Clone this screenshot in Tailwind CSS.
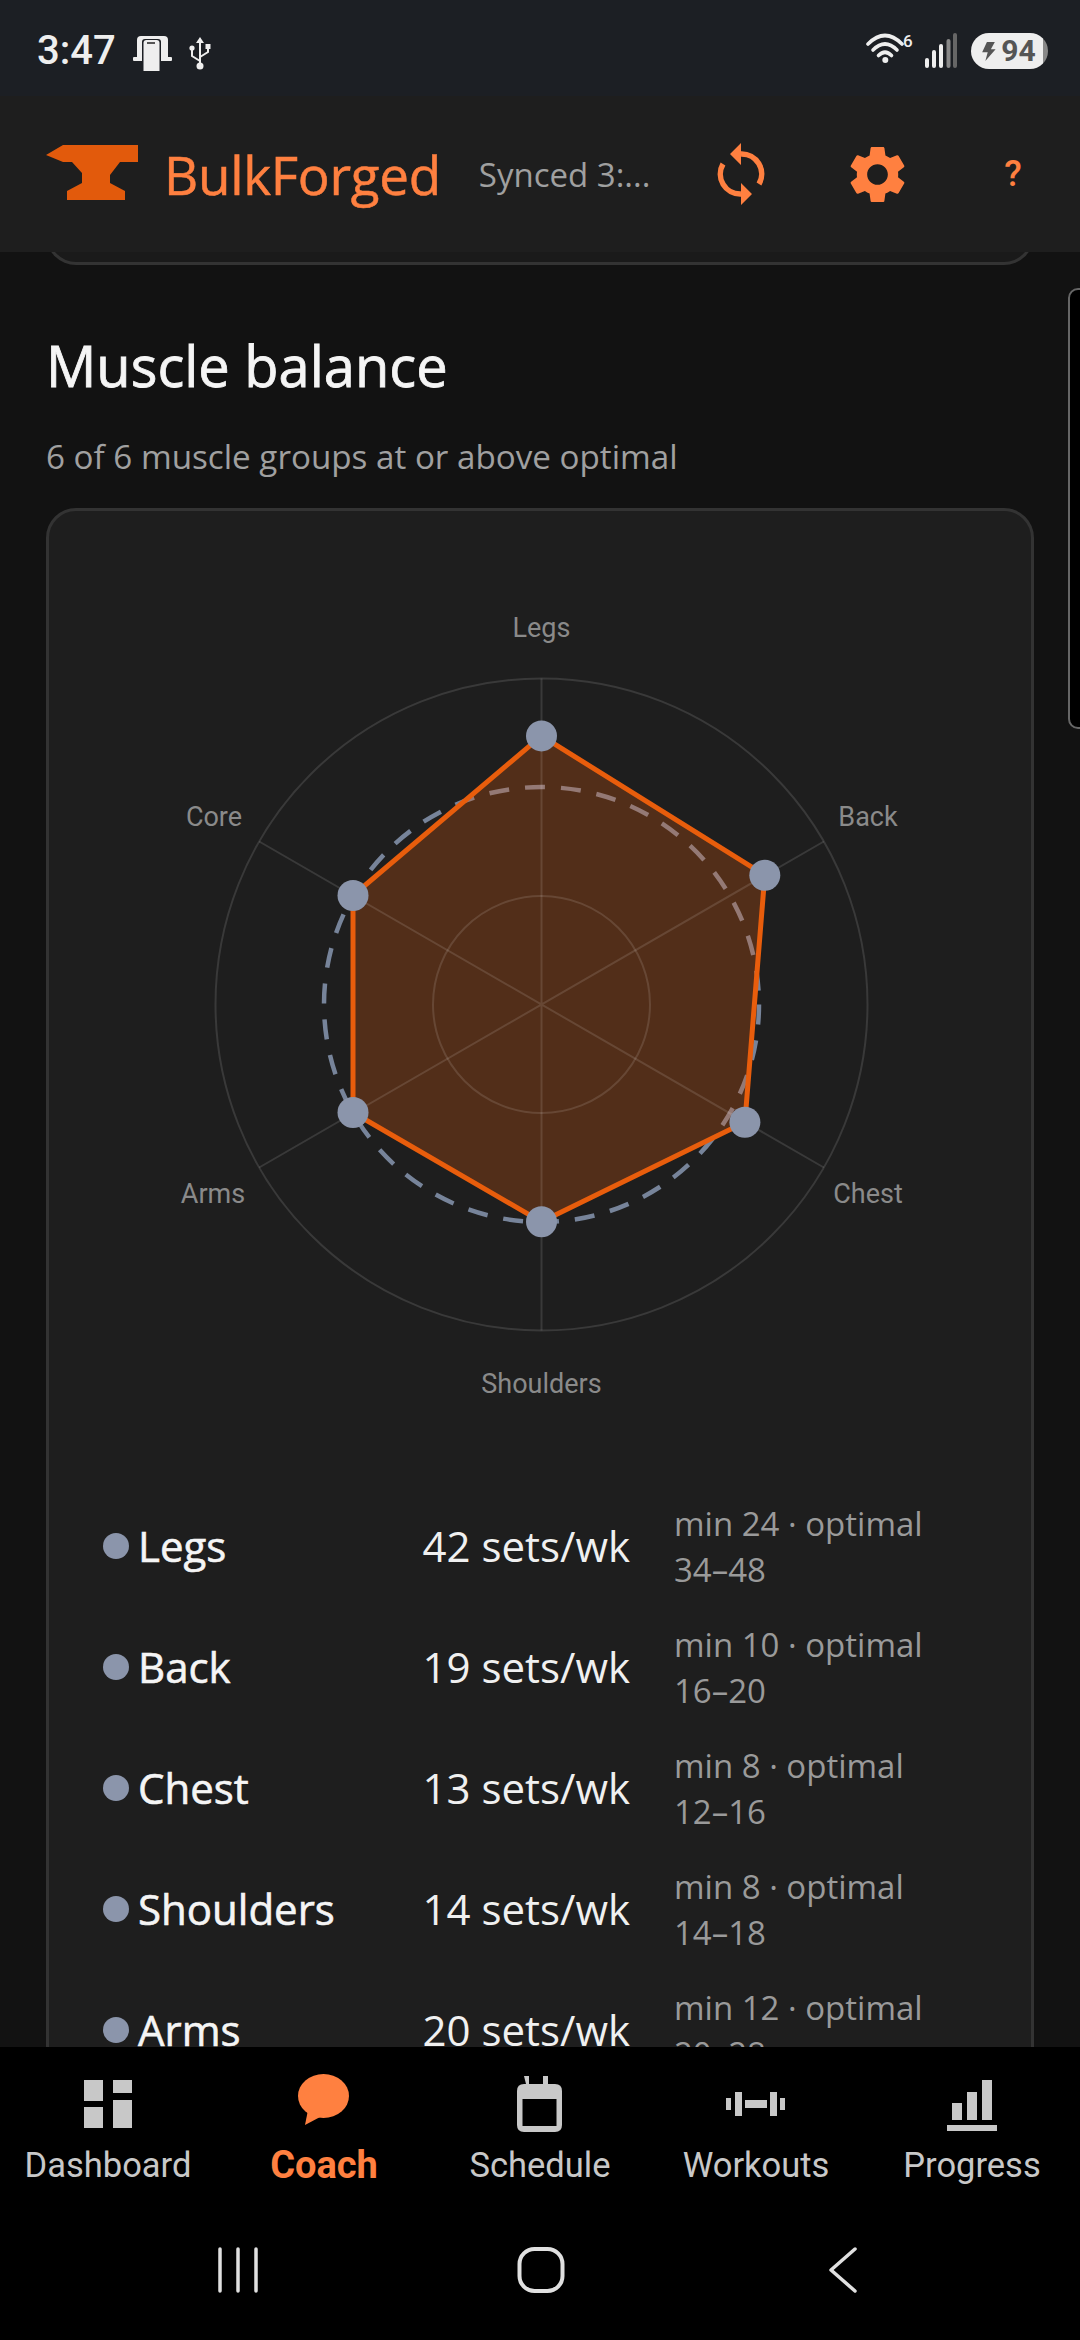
<!DOCTYPE html>
<html lang="en">
<head>
<meta charset="utf-8"/>
<meta content="width=device-width, initial-scale=1.0" name="viewport"/>
<title>BulkForged</title>
<script src="https://cdn.jsdelivr.net/npm/@tailwindcss/browser@4"></script>
</head>
<body class="bg-[#121212]">
<div class="relative flex h-[2340px] w-[1080px] flex-col overflow-hidden font-['Open_Sans',sans-serif]">

<!-- status bar -->
<div class="flex h-[96px] shrink-0 items-center justify-between bg-[#1c1f24] pl-[37px] pr-[32px] text-[#eeeeee]">
  <div class="mt-[5px] flex items-center">
    <span class="font-['Roboto',sans-serif] text-[40px] font-medium leading-none">3:47</span>
    <svg class="ml-[17px] mt-[5px]" width="39" height="36" viewBox="133 35 39 36">
      <path d="M137 58V40q0-4 4-4h23q4 0 4 4v18z" fill="#eee"/>
      <rect x="133" y="57" width="39" height="4" rx="1" fill="#eee"/>
      <path d="M142 71V42q0-3 3-3h13q3 0 3 3v29z" fill="#1c1f24"/>
      <path d="M143.5 71V43q0-3 3-3h10q3 0 3 3v28z" fill="#eee"/>
      <rect x="147" y="42" width="8" height="2" fill="#555"/>
    </svg>
    <svg class="ml-[17px] mt-[5px]" width="24" height="34" viewBox="188 35 24 34">
      <path d="M199 36l-4 6h8z" fill="#eee"/>
      <path d="M199 41v24M199 60l-8-5v-6M199 56l8-5v-5" fill="none" stroke="#eee" stroke-width="2"/>
      <circle cx="191" cy="47" r="2.6" fill="#eee"/>
      <rect x="204.5" y="43" width="5" height="5" fill="#eee"/>
      <circle cx="199" cy="65" r="3.5" fill="#eee"/>
    </svg>
  </div>
  <div class="mt-[6px] flex items-center">
    <svg class="-mt-[4px]" width="50" height="36" viewBox="866 31 50 36">
      <g fill="none" stroke="#eee" stroke-linecap="round" stroke-width="3.6">
        <path d="M869 44Q886 27 903 44"/>
        <path d="M874 50Q886 38 898 50"/>
        <path d="M879.5 55.5Q886 49 892.500 55.500"/>
      </g>
      <circle cx="886.300" cy="60" r="3" fill="#eee"/>
      <text x="904" y="47" fill="#eee" font-family="Roboto" font-size="17" font-weight="500">6</text>
    </svg>
    <svg class="ml-[9px]" width="33" height="36" viewBox="924 33 33 36">
      <g stroke-linecap="round" stroke-width="4">
        <path d="M927 66v-6" stroke="#eee"/>
        <path d="M934 66v-14" stroke="#eee"/>
        <path d="M941 66v-20" stroke="#eee"/>
        <path d="M948.500 66v-25" stroke="#888"/>
        <path d="M955 66v-31" stroke="#666"/>
      </g>
    </svg>
    <div class="ml-[14px] flex h-[36px] w-[77px] items-center justify-center rounded-full bg-[linear-gradient(90deg,#eeeeee_94%,#888888_94%)] pr-[2px]">
      <svg width="15" height="19" viewBox="0 0 18 24"><path d="M7 0h10l-5 9h6L5 24l3-11H1z" fill="#555"/></svg>
      <span class="ml-[5px] font-['Roboto',sans-serif] text-[30px] font-bold leading-none text-[#555555]">94</span>
    </div>
  </div>
</div>

<!-- app header -->
<div class="z-10 flex h-[156px] shrink-0 items-center bg-[#1e1e1e] pl-[46px]">
  <svg class="-mt-[3px]" width="92" height="55" viewBox="46 147 92 55">
    <path d="M46 157L63 147H138V164H120L110 177V185L125 193V202H67V193L82 185V175L72 164H63z" fill="#e25a0c"/>
  </svg>
  <span class="ml-[26px] text-[53px] leading-none tracking-[-0.3px] text-[#ff8040] [-webkit-text-stroke:0.5px]">BulkForged</span>
  <span class="ml-[38px] text-[33px] leading-none text-[#a0a0a0]">Synced 3:...</span>
  <svg class="ml-[67px]" width="48" height="64" viewBox="717 142 48 64">
    <g fill="none" stroke="#ff8040" stroke-width="5.500">
      <path d="M741 154A20 20 0 0 1 759 184"/>
      <path d="M723 164A20 20 0 0 0 741 194"/>
    </g>
    <path d="M741 143L730 154L741 165zM741 183L752 194L741 205z" fill="#ff8040"/>
  </svg>
  <svg class="ml-[78px]" width="69" height="69" viewBox="0 0 24 24">
    <path fill="#ff8040" d="M19.14,12.94c0.04-0.3,0.06-0.61,0.06-0.94c0-0.32-0.02-0.64-0.07-0.94l2.03-1.58c0.18-0.14,0.23-0.41,0.12-0.61 l-1.92-3.32c-0.12-0.22-0.37-0.29-0.59-0.22l-2.39,0.96c-0.5-0.38-1.03-0.7-1.62-0.94L14.4,2.81c-0.04-0.24-0.24-0.41-0.48-0.41 h-3.84c-0.24,0-0.43,0.17-0.47,0.41L9.25,5.35C8.66,5.59,8.12,5.92,7.63,6.29L5.24,5.33c-0.22-0.08-0.47,0-0.59,0.22L2.74,8.87 C2.62,9.08,2.66,9.34,2.86,9.48l2.03,1.58C4.84,11.36,4.8,11.69,4.8,12s0.02,0.64,0.07,0.94l-2.03,1.58 c-0.18,0.14-0.23,0.41-0.12,0.61l1.92,3.32c0.12,0.22,0.37,0.29,0.59,0.22l2.39-0.96c0.5,0.38,1.03,0.7,1.62,0.94l0.36,2.54 c0.05,0.24,0.24,0.41,0.48,0.41h3.84c0.24,0,0.44-0.17,0.47-0.41l0.36-2.54c0.59-0.24,1.13-0.56,1.62-0.94l2.39,0.96 c0.22,0.08,0.47,0,0.59-0.22l1.92-3.32c0.12-0.22,0.07-0.47-0.12-0.61L19.14,12.94z M12,15.6c-1.98,0-3.6-1.62-3.6-3.6 s1.62-3.6,3.6-3.6s3.6,1.62,3.6,3.6S13.98,15.6,12,15.6z"/>
  </svg>
  <span class="ml-[92px] font-['Roboto',sans-serif] text-[36px] font-medium leading-none text-[#ff8040]">?</span>
</div>

<!-- scrolling content -->
<div class="min-h-0 flex-1 overflow-hidden px-[46px]">
  <div class="-mt-[40px] h-[53px] rounded-b-[30px] border-x-[3px] border-b-[3px] border-[#333333] bg-[#1a1a1a]"></div>
  <h2 class="mt-[66px] text-[56px] font-medium leading-[68px] text-[#f5f5f5] [-webkit-text-stroke:0.8px]">Muscle balance</h2>
  <p class="mt-[35px] text-[33.2px] leading-[46px] text-[#a0a0a0]">6 of 6 muscle groups at or above optimal</p>
  <div class="mt-[28px] h-[1700px] rounded-[30px] border-[3px] border-[#333333] bg-[#1e1e1e]">
    <svg class="block" width="980" height="949" viewBox="49 511.500 980 949">
      <circle cx="541.500" cy="1005" r="217.500" fill="none" stroke="#77849a" stroke-width="4.500" stroke-dasharray="20 16"/>
      <path d="M541.500 736.400L764.800 875.700L744.900 1122.700L541.500 1222.300L353 1113V896z" fill="#e85d0c" fill-opacity="0.26" stroke="#e85d0c" stroke-width="5" stroke-linejoin="round"/>
      <g fill="none" stroke="#ffffff" stroke-opacity="0.12" stroke-width="2">
        <circle cx="541.500" cy="1005" r="326"/>
        <circle cx="541.500" cy="1005" r="108.500"/>
        <path d="M541.500 679V1331M259.200 842L823.800 1168M259.200 1168L823.800 842"/>
      </g>
      <g fill="#8b95ab">
        <circle cx="541.500" cy="736.400" r="15.500"/>
        <circle cx="764.800" cy="875.700" r="15.500"/>
        <circle cx="744.900" cy="1122.700" r="15.500"/>
        <circle cx="541.500" cy="1222.300" r="15.500"/>
        <circle cx="353" cy="1113" r="15.500"/>
        <circle cx="353" cy="896" r="15.500"/>
      </g>
      <g fill="#8a8a8a" font-family="Roboto" font-size="27" text-anchor="middle">
        <text x="541.500" y="637">Legs</text>
        <text x="868" y="826">Back</text>
        <text x="868" y="1203">Chest</text>
        <text x="541.500" y="1393">Shoulders</text>
        <text x="213" y="1203">Arms</text>
        <text x="214" y="826">Core</text>
      </g>
    </svg>
    <div class="pl-[54px] pt-[25px]">
      <div class="flex h-[121px] items-center">
        <span class="h-[26px] w-[26px] shrink-0 rounded-full bg-[#8b95ab]"></span>
        <span class="ml-[9px] w-[260px] text-[42px] font-medium text-[#f5f5f5] [-webkit-text-stroke:0.6px]">Legs</span>
        <span class="w-[232px] text-right text-[42px] text-[#f0f0f0]">42 sets/wk</span>
        <span class="ml-[44px] mt-[3px] w-[270px] text-[33px] leading-[46px] text-[#9a9a9a]">min 24 · optimal 34–48</span>
      </div>
      <div class="flex h-[121px] items-center">
        <span class="h-[26px] w-[26px] shrink-0 rounded-full bg-[#8b95ab]"></span>
        <span class="ml-[9px] w-[260px] text-[42px] font-medium text-[#f5f5f5] [-webkit-text-stroke:0.6px]">Back</span>
        <span class="w-[232px] text-right text-[42px] text-[#f0f0f0]">19 sets/wk</span>
        <span class="ml-[44px] mt-[3px] w-[270px] text-[33px] leading-[46px] text-[#9a9a9a]">min 10 · optimal 16–20</span>
      </div>
      <div class="flex h-[121px] items-center">
        <span class="h-[26px] w-[26px] shrink-0 rounded-full bg-[#8b95ab]"></span>
        <span class="ml-[9px] w-[260px] text-[42px] font-medium text-[#f5f5f5] [-webkit-text-stroke:0.6px]">Chest</span>
        <span class="w-[232px] text-right text-[42px] text-[#f0f0f0]">13 sets/wk</span>
        <span class="ml-[44px] mt-[3px] w-[270px] text-[33px] leading-[46px] text-[#9a9a9a]">min 8 · optimal 12–16</span>
      </div>
      <div class="flex h-[121px] items-center">
        <span class="h-[26px] w-[26px] shrink-0 rounded-full bg-[#8b95ab]"></span>
        <span class="ml-[9px] w-[260px] text-[42px] font-medium text-[#f5f5f5] [-webkit-text-stroke:0.6px]">Shoulders</span>
        <span class="w-[232px] text-right text-[42px] text-[#f0f0f0]">14 sets/wk</span>
        <span class="ml-[44px] mt-[3px] w-[270px] text-[33px] leading-[46px] text-[#9a9a9a]">min 8 · optimal 14–18</span>
      </div>
      <div class="flex h-[121px] items-center">
        <span class="h-[26px] w-[26px] shrink-0 rounded-full bg-[#8b95ab]"></span>
        <span class="ml-[9px] w-[260px] text-[42px] font-medium text-[#f5f5f5] [-webkit-text-stroke:0.6px]">Arms</span>
        <span class="w-[232px] text-right text-[42px] text-[#f0f0f0]">20 sets/wk</span>
        <span class="ml-[44px] mt-[3px] w-[270px] text-[33px] leading-[46px] text-[#9a9a9a]">min 12 · optimal 20–28</span>
      </div>
    </div>
  </div>
</div>

<!-- edge drawer handle -->
<div class="absolute left-[1068px] top-[288px] h-[441px] w-[30px] rounded-[10px] border-2 border-[#666666] bg-black"></div>

<!-- bottom tabs -->
<div class="z-10 h-[293px] shrink-0 bg-black">
  <div class="grid h-[163px] grid-cols-5 font-['Roboto',sans-serif] text-[34.5px] leading-[36px] text-[#c8c8c8]">
    <div class="flex flex-col items-center">
      <div class="h-[100px]">
        <svg class="mt-[33px]" width="48" height="48" viewBox="84 2080 48 48" fill="#c8c8c8">
          <path d="M84 2080h19v21h-19zM113 2080h19v13h-19zM113 2100h19v28h-19zM84 2107h19v21h-19z"/>
        </svg>
      </div>
      <span>Dashboard</span>
    </div>
    <div class="flex flex-col items-center">
      <div class="h-[100px]">
        <svg class="mt-[27px]" width="52" height="52" viewBox="298 2074 52 52" fill="#ff8040">
          <ellipse cx="323.500" cy="2096" rx="25.500" ry="22"/>
          <path d="M308 2110L305 2125L322 2116z"/>
        </svg>
      </div>
      <span class="text-[38px] font-bold text-[#ff8040]">Coach</span>
    </div>
    <div class="flex flex-col items-center">
      <div class="h-[100px]">
        <svg class="mt-[29px]" width="46" height="56" viewBox="518 2076 46 56">
          <path d="M525 2076h5v8h14v-8h5v8h7q7 0 7 7v34q0 7-7 7h-31q-7 0-7-7v-34q0-7 7-7h2z" fill="#c8c8c8"/>
          <rect x="523.500" y="2099" width="34" height="27" fill="#000"/>
        </svg>
      </div>
      <span>Schedule</span>
    </div>
    <div class="flex flex-col items-center">
      <div class="h-[100px]">
        <svg class="mt-[45px]" width="60" height="24" viewBox="726 2092 60 24" fill="#c8c8c8">
          <path d="M726 2098h5v12h-5zM735 2092h7v24h-7zM745 2100h22v8h-22zM770 2092h7v24h-7zM780 2098h5v12h-5z"/>
        </svg>
      </div>
      <span>Workouts</span>
    </div>
    <div class="flex flex-col items-center">
      <div class="h-[100px]">
        <svg class="mt-[33px]" width="50" height="51" viewBox="947 2080 50 51" fill="#c8c8c8">
          <path d="M952 2103h10v17h-10zM967 2092h10v28h-10zM982 2080h10v40h-10zM947 2125h50v6h-50z"/>
        </svg>
      </div>
      <span>Progress</span>
    </div>
  </div>
  <!-- system nav -->
  <div class="flex h-[130px] items-start justify-center">
    <svg class="mt-[36px]" width="1080" height="48" viewBox="0 2245 1080 48" fill="none" stroke="#e0e0e0" stroke-width="3.500">
      <path d="M220 2248V2290M238 2248V2290M256 2248V2290" stroke-linecap="round"/>
      <rect x="519.500" y="2248" width="43" height="42" rx="15" stroke-width="4"/>
      <path d="M855 2248L831 2269L855 2290" stroke-linecap="round" stroke-linejoin="round"/>
    </svg>
  </div>
</div>
</div>
</body>
</html>
